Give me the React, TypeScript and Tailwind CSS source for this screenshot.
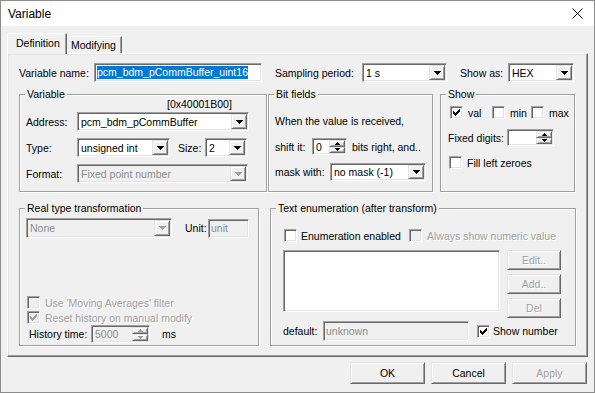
import type { ReactNode } from "react";

const sunken =
  "border border-t-[#a0a0a0] border-l-[#a0a0a0] border-r-white border-b-white shadow-[inset_1px_1px_0_#696969,inset_-1px_-1px_0_#e3e3e3]";
const raised =
  "border border-t-[#e3e3e3] border-l-[#e3e3e3] border-r-[#696969] border-b-[#696969] shadow-[inset_1px_1px_0_#fff,inset_-1px_-1px_0_#a0a0a0] bg-[#f0f0f0]";
const etched = "text-[#a0a0a0] [text-shadow:1px_1px_0_#fff]";

function Down({ w = 7, color = "#000" }: { w?: number; color?: string }) {
  const rows = Math.ceil(w / 2);
  return (
    <svg width={w} height={rows} viewBox={`0 0 ${w} ${rows}`} shapeRendering="crispEdges">
      {Array.from({ length: rows }).map((_, i) => (
        <rect key={i} x={i} y={i} width={w - 2 * i} height={1} fill={color} />
      ))}
    </svg>
  );
}

function Up({ w = 5, color = "#000" }: { w?: number; color?: string }) {
  const rows = Math.ceil(w / 2);
  return (
    <svg width={w} height={rows} viewBox={`0 0 ${w} ${rows}`} shapeRendering="crispEdges">
      {Array.from({ length: rows }).map((_, i) => (
        <rect key={i} x={i} y={rows - 1 - i} width={w - 2 * i} height={1} fill={color} />
      ))}
    </svg>
  );
}

function Combo({ value, cls, disabled }: { value: string; cls: string; disabled?: boolean }) {
  return (
    <div className={`flex shrink-0 p-[1px] ${sunken} ${disabled ? "bg-[#f0f0f0]" : "bg-white"} ${cls}`}>
      <span className={`flex-1 self-center truncate pl-[2px] ${disabled ? "text-[#8d8d8d]" : ""}`}>{value}</span>
      <div className={`flex w-[16px] items-center justify-center ${raised}`}>
        <Down color={disabled ? "#a0a0a0" : "#000"} />
      </div>
    </div>
  );
}

function Spin({ value, cls, disabled }: { value: string; cls: string; disabled?: boolean }) {
  const c = disabled ? "#a0a0a0" : "#000";
  return (
    <div className={`flex shrink-0 p-[1px] ${sunken} ${disabled ? "bg-[#f0f0f0]" : "bg-white"} ${cls}`}>
      <span className={`flex-1 self-center pl-[2px] ${disabled ? "text-[#8d8d8d]" : ""}`}>{value}</span>
      <div className="flex w-[16px] flex-col">
        <div className={`flex flex-1 items-center justify-center ${raised}`}>
          <Up color={c} />
        </div>
        <div className={`flex flex-1 items-center justify-center ${raised}`}>
          <Down w={5} color={c} />
        </div>
      </div>
    </div>
  );
}

function Edit({ value, cls, disabled }: { value: string; cls: string; disabled?: boolean }) {
  return (
    <div className={`flex shrink-0 items-center px-[2px] ${sunken} ${disabled ? "bg-[#f0f0f0] text-[#8d8d8d]" : "bg-white"} ${cls}`}>
      {value}
    </div>
  );
}

function Check({ checked, disabled }: { checked?: boolean; disabled?: boolean }) {
  const ys = [2, 3, 4, 3, 2, 1, 0];
  return (
    <span
      className={`flex h-[13px] w-[13px] shrink-0 items-center justify-center ${sunken} ${disabled ? "bg-[#f0f0f0]" : "bg-white"}`}
    >
      {checked && (
        <svg width="7" height="7" viewBox="0 0 7 7" shapeRendering="crispEdges">
          {ys.map((y, x) => (
            <rect key={x} x={x} y={y} width={1} height={3} fill={disabled ? "#a0a0a0" : "#000"} />
          ))}
        </svg>
      )}
    </span>
  );
}

function Btn({ children, cls, disabled }: { children: ReactNode; cls: string; disabled?: boolean }) {
  return (
    <div className={`flex shrink-0 items-center justify-center ${raised} ${disabled ? etched : ""} ${cls}`}>
      {children}
    </div>
  );
}

function Group({ title, cls, children }: { title: string; cls: string; children: ReactNode }) {
  return (
    <div className={`relative shrink-0 border border-[#a0a0a0] shadow-[inset_1px_1px_0_#fff,1px_1px_0_#fff] ${cls}`}>
      <span className="absolute left-[5px] top-[-7px] bg-[#f0f0f0] px-[2px] leading-[13px]">{title}</span>
      {children}
    </div>
  );
}

export default function App() {
  return (
    <div className="flex h-[393px] w-[595px] flex-col border border-[#8c8c8c] bg-[#f0f0f0] font-['Liberation_Sans',Arial,sans-serif] text-[10.5px] leading-[12px] text-black">
      <div className="flex h-[25px] shrink-0 items-center justify-between bg-white pl-[7px] pr-[11px] text-[12px]">
        <span>Variable</span>
        <svg width="11" height="11" viewBox="0 0 11 11">
          <path d="M0.5 0.5l10 10M10.5 0.5l-10 10" stroke="#000" strokeWidth="1" />
        </svg>
      </div>

      <div className="flex flex-1 flex-col px-[6px] pt-[7px]">
        {/* tabs */}
        <div className="flex h-[20px] items-end">
          <div className="relative z-10 -mb-px h-[21px] w-[60px] border-l border-r border-t border-l-white border-r-[#696969] border-t-white bg-[#f0f0f0] pl-[8px] pt-[3px] shadow-[inset_-1px_0_0_#a0a0a0]">
            Definition
          </div>
          <div className="h-[17px] w-[55px] border-r border-t border-r-[#696969] border-t-white pl-[4px] pt-[2px] shadow-[inset_-1px_0_0_#a0a0a0]">
            Modifying
          </div>
        </div>

        {/* panel */}
        <div className="h-[304px] w-[581px] border border-b-[#696969] border-l-white border-r-[#696969] border-t-white shadow-[inset_-1px_-1px_0_#a0a0a0,inset_1px_1px_0_#e3e3e3]">
          <div className="flex flex-col pl-[11px] pt-[9px]">
            <div className="flex h-[19px] items-center">
              <span className="w-[75px]">Variable name:</span>
              <div className={`flex h-[19px] w-[168px] shrink-0 items-center bg-white px-[2px] ${sunken}`}>
                <span className="bg-[#0078d7] leading-[13px] text-white">pcm_bdm_pCommBuffer_uint16</span>
              </div>
              <span className="ml-[13px] w-[87px]">Sampling period:</span>
              <Combo cls="h-[19px] w-[85px]" value="1 s" />
              <span className="ml-[13px] w-[48px]">Show as:</span>
              <Combo cls="h-[19px] w-[66px]" value="HEX" />
            </div>

            <div className="mt-[12px] flex items-start">
              <Group title="Variable" cls="h-[98px] w-[248px]">
                <div className="flex flex-col pl-[6px] pt-[3px]">
                  <span className="ml-[141px] h-[12px]">[0x40001B00]</span>
                  <div className="mt-[2px] flex items-center">
                    <span className="w-[51px]">Address:</span>
                    <Combo cls="h-[19px] w-[172px]" value="pcm_bdm_pCommBuffer" />
                  </div>
                  <div className="mt-[7px] flex items-center">
                    <span className="w-[51px]">Type:</span>
                    <Combo cls="h-[19px] w-[93px]" value="unsigned int" />
                    <span className="ml-[8px] w-[27px]">Size:</span>
                    <Combo cls="h-[19px] w-[42px]" value="2" />
                  </div>
                  <div className="mt-[7px] flex items-center">
                    <span className="w-[51px]">Format:</span>
                    <Combo disabled cls="h-[19px] w-[171px]" value="Fixed point number" />
                  </div>
                </div>
              </Group>

              <Group title="Bit fields" cls="ml-[1px] h-[98px] w-[165px]">
                <div className="flex flex-col pl-[6px] pt-[20px]">
                  <span>When the value is received,</span>
                  <div className="mt-[11px] flex h-[17px] items-center">
                    <span className="w-[37px]">shift it:</span>
                    <Spin cls="h-[17px] w-[35px]" value="0" />
                    <span className="ml-[5px]">bits right, and..</span>
                  </div>
                  <div className="mt-[8px] flex items-center">
                    <span className="w-[55px]">mask with:</span>
                    <Combo cls="h-[18px] w-[96px]" value="no mask (-1)" />
                  </div>
                </div>
              </Group>

              <Group title="Show" cls="ml-[7px] h-[98px] w-[135px]">
                <div className="flex flex-col pl-[7px] pt-[11px]">
                  <div className="ml-[2px] flex h-[13px] items-center">
                    <div className="flex w-[42px] items-center">
                      <Check checked />
                      <span className="ml-[5px]">val</span>
                    </div>
                    <div className="flex w-[39px] items-center">
                      <Check />
                      <span className="ml-[5px]">min</span>
                    </div>
                    <div className="flex items-center">
                      <Check />
                      <span className="ml-[5px]">max</span>
                    </div>
                  </div>
                  <div className="mt-[10px] flex items-center">
                    <span className="w-[59px]">Fixed digits:</span>
                    <Spin cls="h-[17px] w-[47px]" value="" />
                  </div>
                  <div className="ml-[1px] mt-[10px] flex items-center">
                    <Check />
                    <span className="ml-[5px]">Fill left zeroes</span>
                  </div>
                </div>
              </Group>
            </div>

            <div className="mt-[16px] flex items-start">
              <Group title="Real type transformation" cls="h-[138px] w-[240px]">
                <div className="flex flex-col pl-[6px] pt-[9px]">
                  <div className="flex items-center">
                    <Combo disabled cls="h-[20px] w-[146px]" value="None" />
                    <span className="ml-[13px] w-[23px]">Unit:</span>
                    <Edit disabled cls="h-[19px] w-[41px]" value="unit" />
                  </div>
                  <div className="ml-[1px] mt-[58px] flex items-center">
                    <Check disabled />
                    <span className={`ml-[5px] ${etched}`}>Use 'Moving Averages' filter</span>
                  </div>
                  <div className="ml-[1px] mt-[2px] flex items-center">
                    <Check disabled checked />
                    <span className={`ml-[5px] ${etched}`}>Reset history on manual modify</span>
                  </div>
                  <div className="mt-[1px] flex items-center">
                    <span className="ml-[3px] w-[62px]">History time:</span>
                    <Spin disabled cls="h-[18px] w-[59px]" value="5000" />
                    <span className="ml-[12px]">ms</span>
                  </div>
                </div>
              </Group>

              <Group title="Text enumeration (after transform)" cls="ml-[11px] h-[138px] w-[306px]">
                <div className="flex flex-col pl-[12px] pt-[20px]">
                  <div className="flex h-[13px] items-center">
                    <span className="ml-[1px]">
                      <Check />
                    </span>
                    <span className="ml-[4px] w-[108px]">Enumeration enabled</span>
                    <Check disabled />
                    <span className={`ml-[5px] ${etched}`}>Always show numeric value</span>
                  </div>
                  <div className="mt-[8px] flex items-start">
                    <div className={`h-[62px] w-[217px] shrink-0 bg-white ${sunken}`} />
                    <div className="ml-[7px] flex flex-col gap-[4px]">
                      <Btn disabled cls="h-[20px] w-[54px]">Edit..</Btn>
                      <Btn disabled cls="h-[20px] w-[54px]">Add..</Btn>
                      <Btn disabled cls="h-[20px] w-[54px]">Del</Btn>
                    </div>
                  </div>
                  <div className="mt-[3px] flex items-center">
                    <span className="w-[40px]">default:</span>
                    <Edit disabled cls="h-[20px] w-[146px]" value="unknown" />
                    <span className="ml-[8px]">
                      <Check checked />
                    </span>
                    <span className="ml-[3px]">Show number</span>
                  </div>
                </div>
              </Group>
            </div>
          </div>
        </div>

        {/* buttons */}
        <div className="mt-[5px] flex justify-end gap-[6px] pr-[1px]">
          <Btn cls="h-[22px] w-[75px]">OK</Btn>
          <Btn cls="h-[22px] w-[75px]">Cancel</Btn>
          <Btn disabled cls="h-[22px] w-[75px]">Apply</Btn>
        </div>
      </div>
    </div>
  );
}
